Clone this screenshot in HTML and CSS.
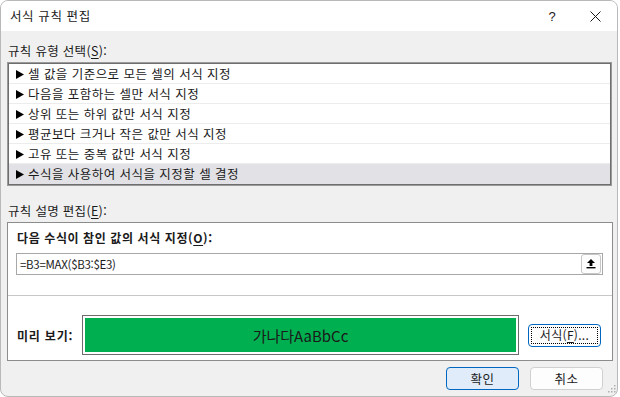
FILE: index.html
```html
<!DOCTYPE html>
<html lang="ko">
<head>
<meta charset="utf-8">
<title>서식 규칙 편집</title>
<link rel="stylesheet" href="styles.css">
</head>
<body>
<div class="window">
  <div class="titlebar">
    <span class="title">서식 규칙 편집</span>
    <div class="caption">
      <span class="cap-btn help">?</span>
      <span class="cap-btn close"><svg width="11" height="11" viewBox="0 0 11 11"><path d="M0.5 0.5 L10.5 10.5 M10.5 0.5 L0.5 10.5" stroke="#1a1a1a" stroke-width="1" fill="none"/></svg></span>
    </div>
  </div>
  <div class="body">
    <div class="label first">규칙 유형 선택(<span class="mn">S</span>):</div>
    <div class="listbox">
      <div class="row"><svg class="tri" width="8" height="9" viewBox="0 0 8 9"><polygon points="0,0 8,4.5 0,9" fill="#000"/></svg><span>셀 값을 기준으로 모든 셀의 서식 지정</span></div>
      <div class="row"><svg class="tri" width="8" height="9" viewBox="0 0 8 9"><polygon points="0,0 8,4.5 0,9" fill="#000"/></svg><span>다음을 포함하는 셀만 서식 지정</span></div>
      <div class="row"><svg class="tri" width="8" height="9" viewBox="0 0 8 9"><polygon points="0,0 8,4.5 0,9" fill="#000"/></svg><span>상위 또는 하위 값만 서식 지정</span></div>
      <div class="row"><svg class="tri" width="8" height="9" viewBox="0 0 8 9"><polygon points="0,0 8,4.5 0,9" fill="#000"/></svg><span>평균보다 크거나 작은 값만 서식 지정</span></div>
      <div class="row"><svg class="tri" width="8" height="9" viewBox="0 0 8 9"><polygon points="0,0 8,4.5 0,9" fill="#000"/></svg><span>고유 또는 중복 값만 서식 지정</span></div>
      <div class="row selected"><svg class="tri" width="8" height="9" viewBox="0 0 8 9"><polygon points="0,0 8,4.5 0,9" fill="#000"/></svg><span>수식을 사용하여 서식을 지정할 셀 결정</span></div>
    </div>
    <div class="label second">규칙 설명 편집(<span class="mn">E</span>):</div>
    <div class="panel">
      <div class="panel-top">
        <div class="panel-head">다음 수식이 참인 값의 서식 지정(<span class="mn">O</span>):</div>
        <div class="formula">
          <span class="formula-text">=B3=MAX($B3:$E3)</span>
          <span class="collapse"><svg width="20" height="20" viewBox="0 0 20 20"><polygon points="10,5 6,9 8.6,9 8.6,12 11.4,12 11.4,9 14,9" fill="#000"/><rect x="5.5" y="13" width="9" height="1.4" fill="#000"/></svg></span>
        </div>
      </div>
      <div class="sep"></div>
      <div class="preview-row">
        <span class="preview-label">미리 보기:</span>
        <div class="preview"><div class="swatch">가나다AaBbCc</div></div>
        <span class="fmt-btn"><span class="focus">서식(<span class="mn">F</span>)...</span></span>
      </div>
    </div>
    <div class="actions">
      <span class="btn primary">확인</span>
      <span class="btn">취소</span>
    </div>
  </div>
  <svg class="grip" width="10" height="10" viewBox="0 0 10 10">
    <rect x="8" y="0" width="1.5" height="1.5" fill="#b0b0b0"/>
    <rect x="5" y="3" width="1.5" height="1.5" fill="#b0b0b0"/>
    <rect x="8" y="3" width="1.5" height="1.5" fill="#b0b0b0"/>
    <rect x="2" y="6" width="1.5" height="1.5" fill="#b0b0b0"/>
    <rect x="5" y="6" width="1.5" height="1.5" fill="#b0b0b0"/>
    <rect x="8" y="6" width="1.5" height="1.5" fill="#b0b0b0"/>
  </svg>
</div>
</body>
</html>
```

FILE: styles.css
```css
* { box-sizing: border-box; }
html, body {
  margin: 0;
  padding: 0;
  background: #ffffff;
}
body {
  font-family: "Noto Sans CJK KR", "Noto Sans", sans-serif;
  font-size: 12px;
  color: #1a1a1a;
  width: 620px;
  height: 397px;
  overflow: hidden;
}
.window {
  position: relative;
  width: 618px;
  height: 397px;
  border: 1px solid #b9b9b9;
  border-radius: 8px;
  background: #f0f0f0;
  overflow: hidden;
  display: flex;
  flex-direction: column;
}
.titlebar {
  height: 30px;
  background: #ffffff;
  display: flex;
  align-items: center;
  justify-content: space-between;
  padding-left: 9px;
  flex: none;
}
.title {
  font-size: 12.5px;
  line-height: 16px;
  letter-spacing: 0.6px;
  color: #1a1a1a;
}
.caption {
  display: flex;
  align-items: center;
  height: 30px;
}
.cap-btn {
  display: flex;
  align-items: center;
  justify-content: center;
  height: 30px;
}
.help {
  width: 46px;
  font-size: 13px;
  font-family: "Liberation Sans", sans-serif;
}
.close {
  width: 42px;
  padding-right: 2px;
}
.body {
  flex: 1;
  display: flex;
  flex-direction: column;
  padding: 0 4px 0 6px;
}
.label {
  font-size: 12.5px;
  line-height: 16px;
  height: 16px;
  padding-left: 1px;
  letter-spacing: 0.3px;
}
.label.first { margin-top: 12px; }
.label.second { margin-top: 17px; }
.mn { text-decoration: underline; text-underline-offset: 2px; }
.listbox {
  margin-top: 3px;
  width: 605px;
  height: 124px;
  background: #ffffff;
  border: 1px solid #9a9a9a;
  box-shadow: inset 1px 1px 0 #6e6e6e, inset -1px -1px 0 #6e6e6e;
  padding: 1px;
}
.row {
  height: 20px;
  display: flex;
  align-items: center;
  gap: 4px;
  padding-left: 7px;
  border-bottom: 1px solid #ececec;
  font-size: 12.5px;
  line-height: 20px;
  letter-spacing: 0.45px;
}
.row:last-child { border-bottom: none; }
.row.selected { background: #e2e2e6; }
.tri { flex: none; margin-top: 1px; }
.panel {
  margin-top: 3px;
  width: 606px;
  height: 139px;
  background: #ffffff;
  border: 1px solid #8c8c8c;
  display: flex;
  flex-direction: column;
}
.panel-top {
  padding: 7px 9px 0 8px;
}
.panel-head {
  font-weight: bold;
  line-height: 16px;
  padding-left: 1px;
  letter-spacing: 0.6px;
}
.formula {
  margin-top: 7px;
  height: 22px;
  border: 1px solid #a8a8a8;
  display: flex;
  align-items: center;
  justify-content: space-between;
  padding: 0 1px 0 3px;
}
.formula-text {
  font-size: 11.5px;
  line-height: 20px;
  letter-spacing: -0.3px;
}
.collapse {
  width: 20px;
  height: 20px;
  border: 1px solid #c6c6c6;
  border-radius: 3px;
  background: #fdfdfd;
  display: flex;
  align-items: center;
  justify-content: center;
}
.collapse svg { margin: -1px; }
.sep {
  margin-top: 20px;
  height: 1px;
  background: #c8c8c8;
}
.preview-row {
  margin-top: 19px;
  display: flex;
  align-items: center;
  padding-left: 9px;
}
.preview-label {
  font-weight: bold;
  width: 65px;
  flex: none;
  letter-spacing: 0.8px;
}
.preview {
  width: 437px;
  height: 40px;
  border: 1px solid #6d6d6d;
  padding: 2px;
  background: #ffffff;
  flex: none;
}
.swatch {
  height: 100%;
  background: #00b050;
  display: flex;
  align-items: center;
  justify-content: center;
  font-size: 15px;
  color: #1a1a1a;
}
.fmt-btn {
  margin-left: 9px;
  width: 73px;
  height: 23px;
  border: 1px solid #0067c0;
  border-radius: 4px;
  background: #fdfdfd;
  padding: 2px;
  display: flex;
}
.focus {
  flex: 1;
  border: 1px dotted #000;
  display: flex;
  align-items: center;
  justify-content: center;
  line-height: 16px;
  letter-spacing: 0.3px;
}
.actions {
  margin-top: 6px;
  display: flex;
  justify-content: flex-end;
  gap: 11px;
  padding-right: 10px;
}
.btn {
  width: 73px;
  height: 23px;
  border: 1px solid #d0d0d0;
  border-radius: 4px;
  background: #fdfdfd;
  display: flex;
  align-items: center;
  justify-content: center;
  font-size: 12.5px;
  line-height: 16px;
  letter-spacing: 0.4px;
}
.btn.primary {
  background: #e0ecf9;
  border-color: #0067c0;
}
.grip {
  position: absolute;
  right: 1px;
  bottom: 1px;
}
```
